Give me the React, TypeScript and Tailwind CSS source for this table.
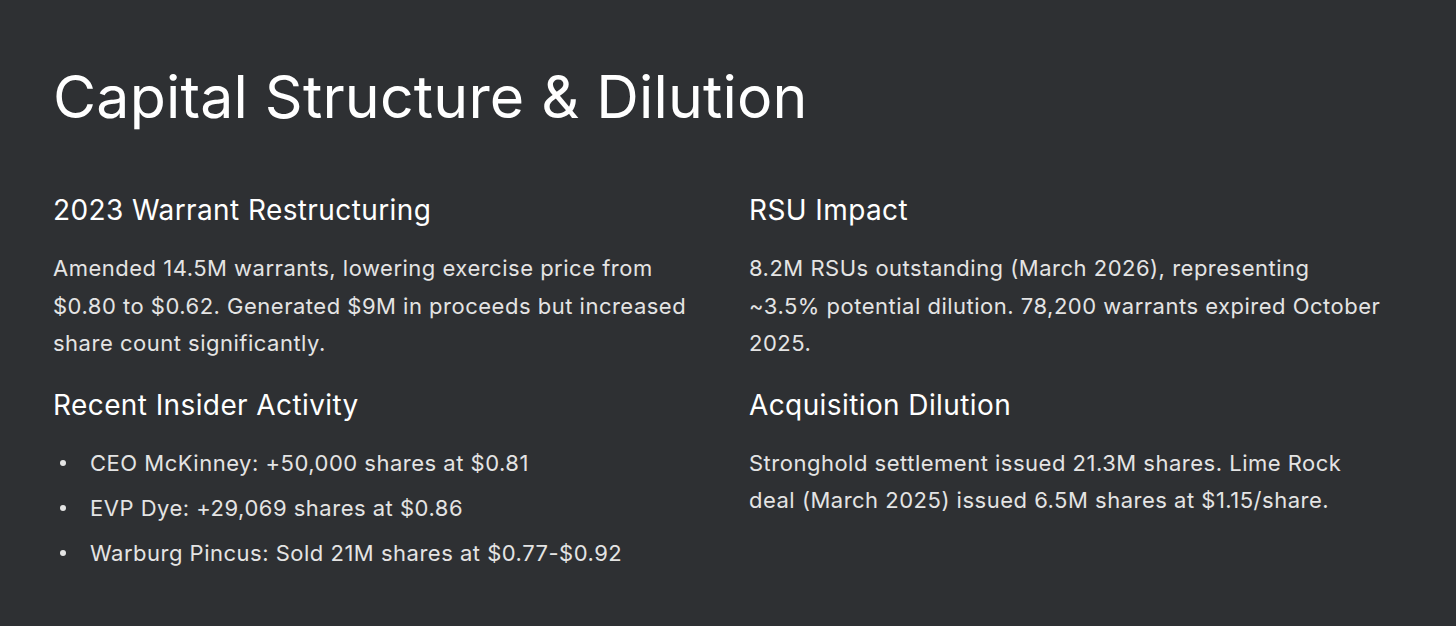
import React from "react";

export default function App() {
  const body = "text-[22px] leading-[37.5px] tracking-[0.5px] text-[#e4e4e4]";
  const head = "text-[28px] leading-[36px] tracking-[0.4px] text-white font-normal";
  return (
    <div
      className="w-[1456px] h-[626px] bg-[#2e3033] px-[53px] pt-[64px] overflow-hidden"
      style={{ fontFamily: "Inter, 'Liberation Sans', sans-serif" }}
    >
      <h1 className="text-[59px] leading-[66px] text-white font-normal tracking-[0.2px]">
        Capital Structure &amp; Dilution
      </h1>
      <div className="grid grid-cols-[654px_635px] gap-x-[42px] mt-[62px]">
        <div>
          <h2 className={head}>2023 Warrant Restructuring</h2>
          <p className={`${body} mt-[22px]`}>
            Amended 14.5M warrants, lowering exercise price from $0.80 to $0.62. Generated $9M in
            proceeds but increased share count significantly.
          </p>
          <h2 className={`${head} mt-[24px]`}>Recent Insider Activity</h2>
          <ul className={`${body} mt-[22px] flex flex-col gap-[7.5px]`}>
            {[
              "CEO McKinney: +50,000 shares at $0.81",
              "EVP Dye: +29,069 shares at $0.86",
              "Warburg Pincus: Sold 21M shares at $0.77-$0.92",
            ].map((t) => (
              <li key={t} className="flex items-center">
                <span className="w-[6px] h-[6px] rounded-full bg-[#e4e4e4] ml-[7px] mr-[24px] shrink-0" />
                <span>{t}</span>
              </li>
            ))}
          </ul>
        </div>
        <div>
          <h2 className={head}>RSU Impact</h2>
          <p className={`${body} mt-[22px]`}>
            8.2M RSUs outstanding (March 2026), representing ~3.5% potential dilution. 78,200
            warrants expired October 2025.
          </p>
          <h2 className={`${head} mt-[24px]`}>Acquisition Dilution</h2>
          <p className={`${body} mt-[22px]`}>
            Stronghold settlement issued 21.3M shares. Lime Rock deal (March 2025) issued 6.5M
            shares at $1.15/share.
          </p>
        </div>
      </div>
    </div>
  );
}
